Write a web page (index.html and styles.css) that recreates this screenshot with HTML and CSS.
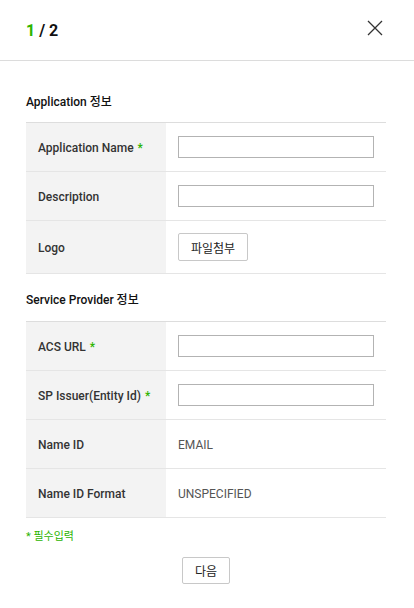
FILE: index.html
```html
<!DOCTYPE html>
<html lang="ko">
<head>
<meta charset="utf-8">
<link rel="stylesheet" href="styles.css">
</head>
<body>
<div class="modal">
  <header class="head">
    <div class="step"><span class="cur">1</span> / 2</div>
    <button class="close" aria-label="닫기">
      <svg width="16" height="16" viewBox="0 0 16 16"><path d="M1 1L15 15M15 1L1 15" stroke="#333" stroke-width="1.3" fill="none"/></svg>
    </button>
  </header>
  <div class="body">
    <h3 class="sec">Application 정보</h3>
    <div class="tbl">
      <div class="row"><div class="th">Application Name <span class="req">*</span></div><div class="td"><input class="inp" type="text"></div></div>
      <div class="row"><div class="th">Description</div><div class="td"><input class="inp" type="text"></div></div>
      <div class="row tall"><div class="th">Logo</div><div class="td"><button class="btn">파일첨부</button></div></div>
    </div>
    <h3 class="sec sec2">Service Provider 정보</h3>
    <div class="tbl">
      <div class="row"><div class="th">ACS URL <span class="req">*</span></div><div class="td"><input class="inp" type="text"></div></div>
      <div class="row"><div class="th">SP Issuer(Entity Id) <span class="req">*</span></div><div class="td"><input class="inp" type="text"></div></div>
      <div class="row"><div class="th">Name ID</div><div class="td val">EMAIL</div></div>
      <div class="row"><div class="th">Name ID Format</div><div class="td val">UNSPECIFIED</div></div>
    </div>
    <p class="note">* 필수입력</p>
    <div class="foot"><button class="btn next">다음</button></div>
  </div>
</div>
</body>
</html>
```
FILE: styles.css
```css
* { box-sizing: border-box; }
html, body { margin: 0; padding: 0; background: #fff; }
body { font-family: Roboto, "Noto Sans CJK KR", sans-serif; color: #333; width: 414px; height: 608px; overflow: hidden; }
.head { height: 61px; border-bottom: 1px solid #dcdcdc; display: flex; align-items: center; justify-content: space-between; padding: 0 31px 0 26px; }
.step { font-size: 16px; font-weight: 700; color: #111; }
.step .cur { color: #2db400; }
.close { border: 0; background: none; padding: 0; width: 16px; height: 16px; display: flex; cursor: pointer; margin-top: -4px; }
.body { padding: 0 28px 0 26px; }
.sec { margin: 0; font-size: 12px; font-weight: 500; color: #111; padding-top: 32px; height: 61px; line-height: 18px; }
.sec2 { padding-top: 17px; height: 47px; }
.tbl { border-top: 1px solid #ddd; }
.row { display: flex; height: 49px; border-bottom: 1px solid #e5e5e5; }
.row.tall { height: 53px; }
.th { width: 140px; background: #f3f3f3; padding: 2px 0 0 12px; display: flex; align-items: center; font-size: 12px; font-weight: 500; color: #333; }
.req { color: #2db400; margin-left: 4px; }
.td { flex: 1; display: flex; align-items: center; padding-left: 12px; font-size: 12px; }
.val { color: #555; padding-top: 2px; }
.inp { width: 196px; height: 22px; border: 1px solid #b3b3b3; margin: 0; padding: 0 4px; }
.btn { height: 28px; padding: 0 12px; border: 1px solid #c8c8c8; border-radius: 2px; background: #fff; font-family: "Noto Sans CJK KR", sans-serif; font-size: 12px; color: #222; }
.note { margin: 11px 0 0; font-size: 11px; color: #2db400; line-height: 16px; }
.foot { display: flex; justify-content: center; margin-top: 12px; }
.next { width: 48px; height: 27px; padding: 0; }
```
